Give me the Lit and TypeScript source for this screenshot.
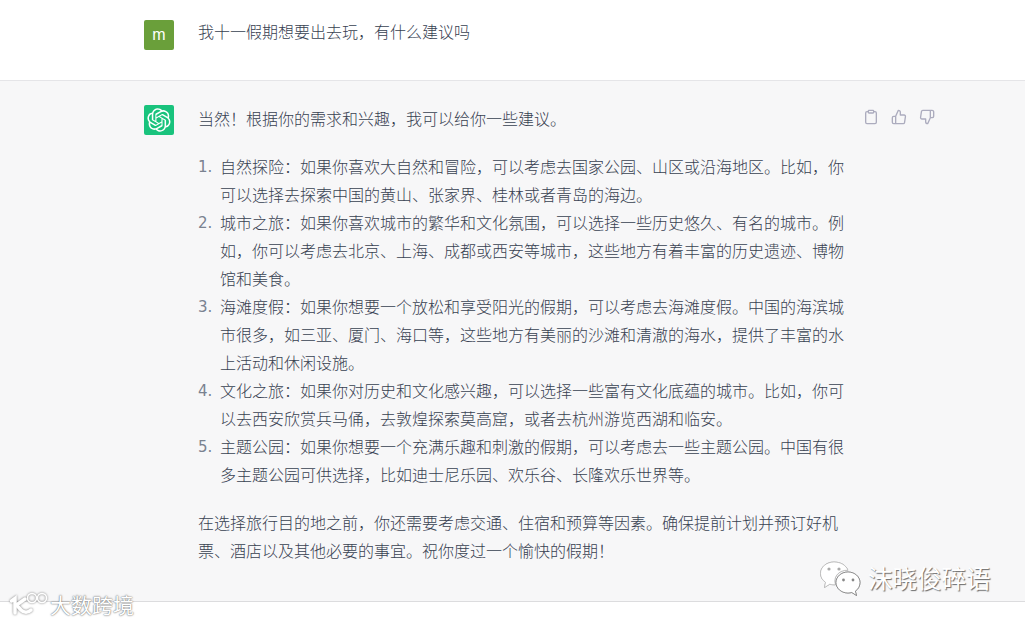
import { LitElement, html, css, svg } from "lit";
import { customElement } from "lit/decorators.js";

// Source strings use plain marks; zh() turns them into the full-width CJK punctuation.
const zh = (s: string) =>
  s.replace(/,/g, "\uFF0C").replace(/:/g, "\uFF1A").replace(/!/g, "\uFF01");

const items: string[][] = [
  ["自然探险:如果你喜欢大自然和冒险,可以考虑去国家公园、山区或沿海地区。比如,你", "可以选择去探索中国的黄山、张家界、桂林或者青岛的海边。"],
  ["城市之旅:如果你喜欢城市的繁华和文化氛围,可以选择一些历史悠久、有名的城市。例", "如,你可以考虑去北京、上海、成都或西安等城市,这些地方有着丰富的历史遗迹、博物", "馆和美食。"],
  ["海滩度假:如果你想要一个放松和享受阳光的假期,可以考虑去海滩度假。中国的海滨城", "市很多,如三亚、厦门、海口等,这些地方有美丽的沙滩和清澈的海水,提供了丰富的水", "上活动和休闲设施。"],
  ["文化之旅:如果你对历史和文化感兴趣,可以选择一些富有文化底蕴的城市。比如,你可", "以去西安欣赏兵马俑,去敦煌探索莫高窟,或者去杭州游览西湖和临安。"],
  ["主题公园:如果你想要一个充满乐趣和刺激的假期,可以考虑去一些主题公园。中国有很", "多主题公园可供选择,比如迪士尼乐园、欢乐谷、长隆欢乐世界等。"],
];

const logo = svg`<path fill="currentColor" d="M37.5324 16.8707C37.9808 15.5241 38.1363 14.0974 37.9886 12.6859C37.8409 11.2744 37.3934 9.91076 36.676 8.68622C35.6126 6.83404 33.9882 5.3676 32.0373 4.4985C30.0864 3.62941 27.9098 3.40259 25.8215 3.85078C24.8796 2.7893 23.7219 1.94125 22.4257 1.36341C21.1295 0.785575 19.7249 0.491269 18.3058 0.500197C16.1708 0.495044 14.0893 1.16803 12.3614 2.42214C10.6335 3.67624 9.34853 5.44666 8.6917 7.47815C7.30085 7.76286 5.98686 8.3414 4.8377 9.17505C3.68854 10.0087 2.73073 11.0782 2.02839 12.312C0.956464 14.1591 0.498905 16.2988 0.721698 18.4228C0.944492 20.5467 1.83612 22.5449 3.268 24.1293C2.81966 25.4759 2.66413 26.9026 2.81182 28.3141C2.95951 29.7256 3.40701 31.0892 4.12437 32.3138C5.18791 34.1659 6.8123 35.6322 8.76321 36.5013C10.7141 37.3704 12.8907 37.5973 14.9789 37.1492C15.9208 38.2107 17.0786 39.0587 18.3747 39.6366C19.6709 40.2144 21.0755 40.5087 22.4946 40.4998C24.6307 40.5054 26.7133 39.8321 28.4418 38.5772C30.1704 37.3223 31.4556 35.5506 32.1119 33.5179C33.5027 33.2332 34.8167 32.6547 35.9659 31.821C37.115 30.9874 38.0728 29.9178 38.7752 28.684C39.8458 26.8371 40.3023 24.6979 40.0789 22.5748C39.8556 20.4517 38.9639 18.4544 37.5324 16.8707ZM22.4978 37.8849C20.7443 37.8874 19.0459 37.2733 17.6994 36.1501C17.7601 36.117 17.8666 36.0586 17.936 36.0161L25.9004 31.4156C26.1003 31.3019 26.2663 31.137 26.3813 30.9378C26.4964 30.7386 26.5563 30.5124 26.5549 30.2825V19.0542L29.9213 20.998C29.9389 21.0068 29.9541 21.0198 29.9656 21.0359C29.977 21.052 29.9842 21.0707 29.9867 21.0902V30.3889C29.9842 32.375 29.1946 34.2791 27.7909 35.6841C26.3872 37.0892 24.4838 37.8806 22.4978 37.8849ZM6.39227 31.0064C5.51397 29.4888 5.19742 27.7107 5.49804 25.9832C5.55718 26.0187 5.66048 26.0818 5.73461 26.1244L13.699 30.7248C13.8975 30.8408 14.1233 30.902 14.3532 30.902C14.583 30.902 14.8088 30.8408 15.0073 30.7248L24.731 25.1103V28.9979C24.7321 29.0177 24.7283 29.0376 24.7199 29.0556C24.7115 29.0736 24.6988 29.0893 24.6829 29.1012L16.6317 33.7497C14.9096 34.7416 12.8643 35.0097 10.9447 34.4954C9.02506 33.9811 7.38785 32.7263 6.39227 31.0064ZM4.29707 13.6194C5.17156 12.0998 6.55279 10.9364 8.19885 10.3327C8.19885 10.4013 8.19491 10.5228 8.19491 10.6071V19.808C8.19351 20.0378 8.25334 20.2638 8.36823 20.4629C8.48312 20.6619 8.64893 20.8267 8.84863 20.9404L18.5723 26.5542L15.206 28.4979C15.1894 28.5089 15.1703 28.5155 15.1505 28.5173C15.1307 28.5191 15.1107 28.516 15.0924 28.5082L7.04046 23.8557C5.32135 22.8601 4.06716 21.2235 3.55289 19.3046C3.03862 17.3858 3.30624 15.3413 4.29707 13.6194ZM31.955 20.0556L22.2312 14.4411L25.5976 12.4981C25.6142 12.4872 25.6333 12.4805 25.6531 12.4787C25.6729 12.4769 25.6928 12.4801 25.7111 12.4879L33.7631 17.1364C34.9967 17.849 36.0017 18.8982 36.6606 20.1613C37.3194 21.4244 37.6047 22.849 37.4832 24.2684C37.3617 25.6878 36.8382 27.0432 35.9743 28.1759C35.1103 29.3086 33.9415 30.1717 32.6047 30.6641C32.6047 30.5947 32.6047 30.4733 32.6047 30.3889V21.188C32.6066 20.9586 32.5474 20.7328 32.4332 20.5338C32.319 20.3348 32.154 20.1698 31.955 20.0556ZM35.3055 15.0128C35.2464 14.9765 35.1431 14.9142 35.069 14.8717L27.1045 10.2712C26.906 10.1554 26.6803 10.0943 26.4504 10.0943C26.2206 10.0943 25.9948 10.1554 25.7963 10.2712L16.0726 15.8858V11.9982C16.0715 11.9783 16.0753 11.9585 16.0837 11.9405C16.0921 11.9225 16.1048 11.9068 16.1207 11.8949L24.1719 7.25025C25.4053 6.53903 26.8158 6.19376 28.2383 6.25482C29.6608 6.31589 31.0364 6.78077 32.2044 7.59508C33.3723 8.40939 34.2842 9.53945 34.8334 10.8531C35.3826 12.1667 35.5464 13.6095 35.3055 15.0128ZM14.2424 21.9419L10.8752 19.9981C10.8576 19.9893 10.8423 19.9763 10.8309 19.9602C10.8195 19.9441 10.8122 19.9254 10.8098 19.9058V10.6071C10.8107 9.18295 11.2173 7.78848 11.9819 6.58696C12.7466 5.38544 13.8377 4.42659 15.1275 3.82264C16.4173 3.21869 17.8524 2.99464 19.2649 3.1767C20.6775 3.35876 22.0089 3.93941 23.1034 4.85067C23.0427 4.88379 22.937 4.94215 22.8668 4.98473L14.9024 9.58517C14.7025 9.69878 14.5366 9.86356 14.4215 10.0626C14.3065 10.2616 14.2466 10.4877 14.2479 10.7175L14.2424 21.9419ZM16.071 17.9991L20.4018 15.4978L24.7325 17.9975V22.9985L20.4018 25.4983L16.071 22.9985V17.9991Z"/>`;

@customElement("app-root")
export class AppRoot extends LitElement {
  static styles = css`
    :host {
      display: block;
      position: relative;
      height: 623px;
      overflow: hidden;
      background: #fff;
      color: #374151;
      font: 16px/28px "Noto Sans CJK SC", "Noto Sans", sans-serif;
      font-weight: 300;
    }
    .row { display: flex; padding-left: 144px; gap: 24px; }
    .user { height: 81px; padding-top: 20px; box-sizing: border-box; border-bottom: 1px solid #e5e5e8; }
    .user .msg { margin-top: -3px; }
    .bot { background: #f7f7f8; padding-top: 24px; padding-bottom: 37px; border-bottom: 1px solid #dcdcde; }
    .avatar {
      width: 30px; height: 30px; flex: none; border-radius: 2px;
      display: flex; align-items: center; justify-content: center; color: #fff;
    }
    .m { background: #6a9f3a; font: 16px/30px "Liberation Sans", sans-serif; }
    .gpt { background: #19c37d; }
    .gpt svg { width: 24px; height: 24px; display: block; }
    .msg { width: 648px; flex: none; margin-top: -1px; }
    p { margin: 0; }
    ol { margin: 20px 0; padding: 0; list-style: none; }
    li { display: flex; }
    .num { width: 22px; flex: none; color: #7a8290; font-family: "DejaVu Sans", sans-serif; font-size: 15px; line-height: 31px; font-weight: 400; }
    .line { display: block; white-space: nowrap; }
    .tools { display: flex; gap: 12px; margin-left: -7px; height: 16px; padding-top: 4px; color: #acacbe; }
    .tools svg { width: 16px; height: 16px; display: block; fill: none; stroke: currentColor; stroke-width: 2; stroke-linecap: round; stroke-linejoin: round; }
    .wm { position: absolute; color: #fff; font-weight: 400; white-space: nowrap; display: flex; align-items: center; }
    .wm-left { left: 10px; top: 589px; font-size: 21px; line-height: 30px; gap: 2px; text-shadow: 0 0 2px #777, 0 0 1px #777; }
    .wm-right { left: 820px; top: 560px; font-size: 24.5px; line-height: 36px; gap: 7px; text-shadow: 1px 1px 1px #6a6a6a; }
    .wm svg { display: block; overflow: visible; }
    .wm-left svg { filter: drop-shadow(0 0 1px #777); }
    .wm-right svg { filter: drop-shadow(0.5px 0.5px 0.5px #888); }
  `;

  render() {
    return html`
      <div lang="zh-CN">
        <div class="row user">
          <div class="avatar m">m</div>
          <div class="msg">${zh("我十一假期想要出去玩,有什么建议吗")}</div>
        </div>
        <div class="row bot">
          <div class="avatar gpt"><svg viewBox="0 0 41 41">${logo}</svg></div>
          <div class="msg">
            <p>${zh("当然!根据你的需求和兴趣,我可以给你一些建议。")}</p>
            <ol>
              ${items.map(
                (lines, i) => html`<li>
                  <span class="num">${i + 1}.</span>
                  <span>${lines.map((l) => html`<span class="line">${zh(l)}</span>`)}</span>
                </li>`
              )}
            </ol>
            <p><span class="line">${zh("在选择旅行目的地之前,你还需要考虑交通、住宿和预算等因素。确保提前计划并预订好机")}</span><span class="line">${zh("票、酒店以及其他必要的事宜。祝你度过一个愉快的假期!")}</span></p>
          </div>
          <div class="tools">
            <svg viewBox="0 0 24 24"><path d="M16 4h2a2 2 0 0 1 2 2v14a2 2 0 0 1-2 2H6a2 2 0 0 1-2-2V6a2 2 0 0 1 2-2h2"/><rect x="8" y="2" width="8" height="4" rx="1"/></svg>
            <svg viewBox="0 0 24 24"><path d="M14 9V5a3 3 0 0 0-3-3l-4 9v11h11.28a2 2 0 0 0 2-1.7l1.38-9a2 2 0 0 0-2-2.3zM7 22H4a2 2 0 0 1-2-2v-7a2 2 0 0 1 2-2h3"/></svg>
            <svg viewBox="0 0 24 24"><path d="M10 15v4a3 3 0 0 0 3 3l4-9V2H5.72a2 2 0 0 0-2 1.7l-1.38 9a2 2 0 0 0 2 2.3zm7-13h2.67A2.31 2.31 0 0 1 22 4v7a2.31 2.31 0 0 1-2.33 2H17"/></svg>
          </div>
        </div>
      </div>
      <div class="wm wm-left">
        <svg width="38" height="24" viewBox="0 0 38 24" fill="none" stroke="#fff">
          <path d="M1.500 9 L5 6.500 V21" stroke-width="3.500" stroke-linecap="round"/>
          <path d="M15 7 L6.500 13 L11 18 C14 21 18 21 21 18" stroke-width="3.500" stroke-linecap="round" stroke-linejoin="round"/>
          <circle cx="22" cy="6" r="4.500" stroke-width="1.500"/>
          <circle cx="32" cy="6" r="4.500" stroke-width="1.500"/>
        </svg>
        <span>大数跨境</span>
      </div>
      <div class="wm wm-right">
        <svg width="41" height="35" viewBox="0 0 41 35">
          <path fill="#fff" stroke="#bbb" stroke-width=".6" d="M14 1C6.500 1 .500 6 .500 12.500c0 3.600 1.900 6.600 5 8.800L4.500 26.500l5.200-3.300c1.400.4 2.800.6 4.300.6h1.500C15 22.500 14.800 21.200 14.800 20c0-6 5.400-10.800 12.200-10.800h.9C26.300 4.500 20.700 1 14 1z"/>
          <path fill="#fff" stroke="#777" stroke-width=".7" d="M40 21.500c0-5.800-5.400-10.500-12-10.500s-12 4.700-12 10.500S21.400 32 28 32c1.300 0 2.600-.2 3.800-.5l4.700 3-1.100-4.400C38.300 28.100 40 25 40 21.500z"/>
          <circle cx="9" cy="8" r="1.600" fill="#aaa"/><circle cx="19" cy="8" r="1.600" fill="#aaa"/>
          <circle cx="23.500" cy="19" r="1.400" fill="#888"/><circle cx="33" cy="19" r="1.400" fill="#888"/>
        </svg>
        <span>沫晓俊碎语</span>
      </div>
    `;
  }
}
